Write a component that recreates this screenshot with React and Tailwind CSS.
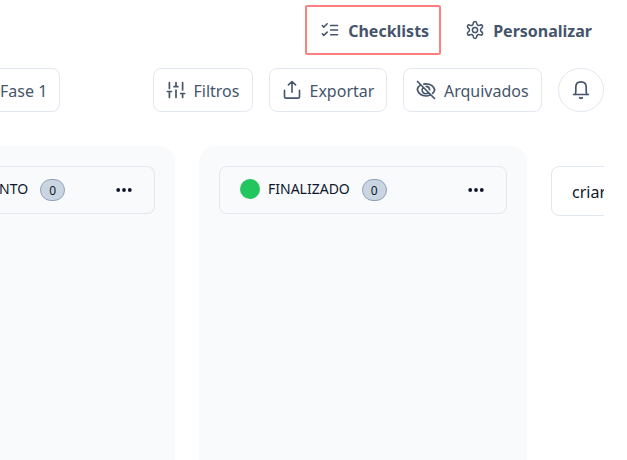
import React from 'react';

function Icon({ children, width = 1.5, className = '' }) {
  return (
    <svg
      width="20"
      height="20"
      viewBox="0 0 20 20"
      fill="none"
      stroke="currentColor"
      strokeWidth={width}
      strokeLinecap="round"
      strokeLinejoin="round"
      className={`shrink-0 ${className}`}
    >
      {children}
    </svg>
  );
}

const ChecklistIcon = () => (
  <Icon>
    <path d="M2.200 5.500l1.600 1.600 3.400-3.300M2.200 13.800l1.600 1.600 3.400-3.300M10.600 5.400h7M10.600 10h7M10.600 14.700h7" />
  </Icon>
);

const GearIcon = () => (
  <Icon>
    {[0, 60, 120, 180, 240, 300].map((angle) => (
      <path
        key={angle}
        transform={`rotate(${angle} 10 10)`}
        d="M8.380 2.980C8.600 1 11.400 1 11.620 2.980C11.900 5.300 13.100 6 15.270 5.090"
      />
    ))}
    <circle cx="10" cy="10" r="2.600" />
  </Icon>
);

const SlidersIcon = () => (
  <Icon width={1.7}>
    <path d="M3.400 2.500v6M3.400 11.500v6M1.400 11.500h4M10 2.500v4.200M8.100 6.700h3.800M10 10.200v7.300M16.600 2.500v7.500M16.600 13.500v4M14.600 13.500h4" />
  </Icon>
);

const ExportIcon = () => (
  <Icon width={1.6}>
    <path d="M2.500 10.200v6.200q0 1.700 1.700 1.700h11.600q1.700 0 1.700-1.700v-6.200M10 12.300V1.800M6.400 4.900L10 1.500l3.600 3.400" />
  </Icon>
);

const HiddenIcon = () => (
  <Icon width={1.7}>
    <path d="M1.500 1.500l17 17M4.500 4.900C2.600 6.200 1.600 8.200 1.300 9.600c1.100 3.900 4.600 6.400 8.700 6.400 1.500 0 2.900-.4 4.100-1M7.800 4.100c.7-.2 1.500-.3 2.200-.3 4.100 0 7.600 2.400 8.700 6.100-.4 1.300-1.100 2.500-2.100 3.500M7.300 7.500a3.600 3.600 0 0 0 5 5.200M10.300 6.400a3.500 3.500 0 0 1 3.300 3.300" />
  </Icon>
);

const BellIcon = () => (
  <Icon width={1.7}>
    <path d="M2.600 14.500h14.800M4.200 14.500c.5-1.200.6-2 .6-3.700V7.200C4.800 4 6.900 1.900 10 1.900s5.200 2.100 5.200 5.300v3.600c0 1.700.1 2.500.6 3.700" />
    <path d="M8.700 17.800q1.300 1 2.600 0" strokeWidth="1.8" />
  </Icon>
);

function ToolButton({ icon, label, className }) {
  return (
    <button
      className={`flex h-11 shrink-0 items-center rounded-lg border border-slate-200 pl-3 text-base ${className}`}
    >
      {icon}
      <span className="pt-0.5 whitespace-nowrap">{label}</span>
    </button>
  );
}

function Count() {
  return (
    <span className="flex h-[22px] w-[25px] shrink-0 items-center justify-center rounded-full border border-slate-400 bg-slate-300 pt-0.5 text-xs text-slate-900">
      0
    </span>
  );
}

function More() {
  return (
    <svg width="16" height="6" viewBox="0 0 16 6" className="ml-auto shrink-0 fill-slate-900">
      <circle cx="2.200" cy="3" r="1.900" />
      <circle cx="8" cy="3" r="1.900" />
      <circle cx="13.800" cy="3" r="1.900" />
    </svg>
  );
}

export default function App() {
  return (
    <div className="h-[460px] w-full overflow-hidden bg-white font-['Noto_Sans',sans-serif] text-slate-600">
      <div className="flex h-full w-[604px] flex-col overflow-hidden">
        <nav className="flex h-[62px] shrink-0 items-start justify-end pt-[5px] pr-3 font-bold">
          <button className="mr-6 flex h-[50px] w-[136px] items-center gap-2 rounded-[2px] border-2 border-[#ff7f7f] pl-[13px]">
            <ChecklistIcon />
            <span className="pt-0.5">Checklists</span>
          </button>
          <button className="flex h-[50px] items-center gap-2">
            <GearIcon />
            <span className="pt-0.5">Personalizar</span>
          </button>
        </nav>

        <div className="flex shrink-0 pt-1.5">
          <button className="mr-[93px] h-11 w-[60px] shrink-0 rounded-r-lg border border-l-0 border-slate-200 pt-0.5 text-left text-base">
            Fase 1
          </button>
          <ToolButton className="mr-4 w-[100px] gap-[7.5px]" icon={<SlidersIcon />} label="Filtros" />
          <ToolButton className="mr-4 w-[118px] gap-[7.5px]" icon={<ExportIcon />} label="Exportar" />
          <ToolButton className="mr-4 w-[139px] gap-2" icon={<HiddenIcon />} label="Arquivados" />
          <button className="flex h-11 w-[46px] shrink-0 items-center justify-center rounded-full border border-slate-200">
            <BellIcon />
          </button>
        </div>

        <main className="mt-[34px] flex flex-1 items-start text-slate-900">
          <section className="mr-6 h-full w-[175px] shrink-0 rounded-tr-2xl bg-slate-50 pt-5 pr-5">
            <div className="flex h-12 items-center rounded-r-lg border border-l-0 border-slate-200 pr-[22px]">
              <span className="mr-3 -ml-px pb-0.5 text-sm">NTO</span>
              <Count />
              <More />
            </div>
          </section>
          <section className="mr-6 h-full w-[328px] shrink-0 rounded-t-2xl bg-slate-50 px-5 pt-5">
            <div className="flex h-12 items-center rounded-lg border border-slate-200 pr-[22px] pl-5">
              <span className="mr-2 mb-0.5 size-5 shrink-0 rounded-full bg-[#22c55e]" />
              <span className="mr-3 pb-0.5 text-sm">FINALIZADO</span>
              <Count />
              <More />
            </div>
          </section>
          <button className="mt-5 h-[50px] w-[200px] shrink-0 rounded-lg border border-slate-200 pt-0.5 pl-5 text-left text-base">
            criar
          </button>
        </main>
      </div>
    </div>
  );
}
